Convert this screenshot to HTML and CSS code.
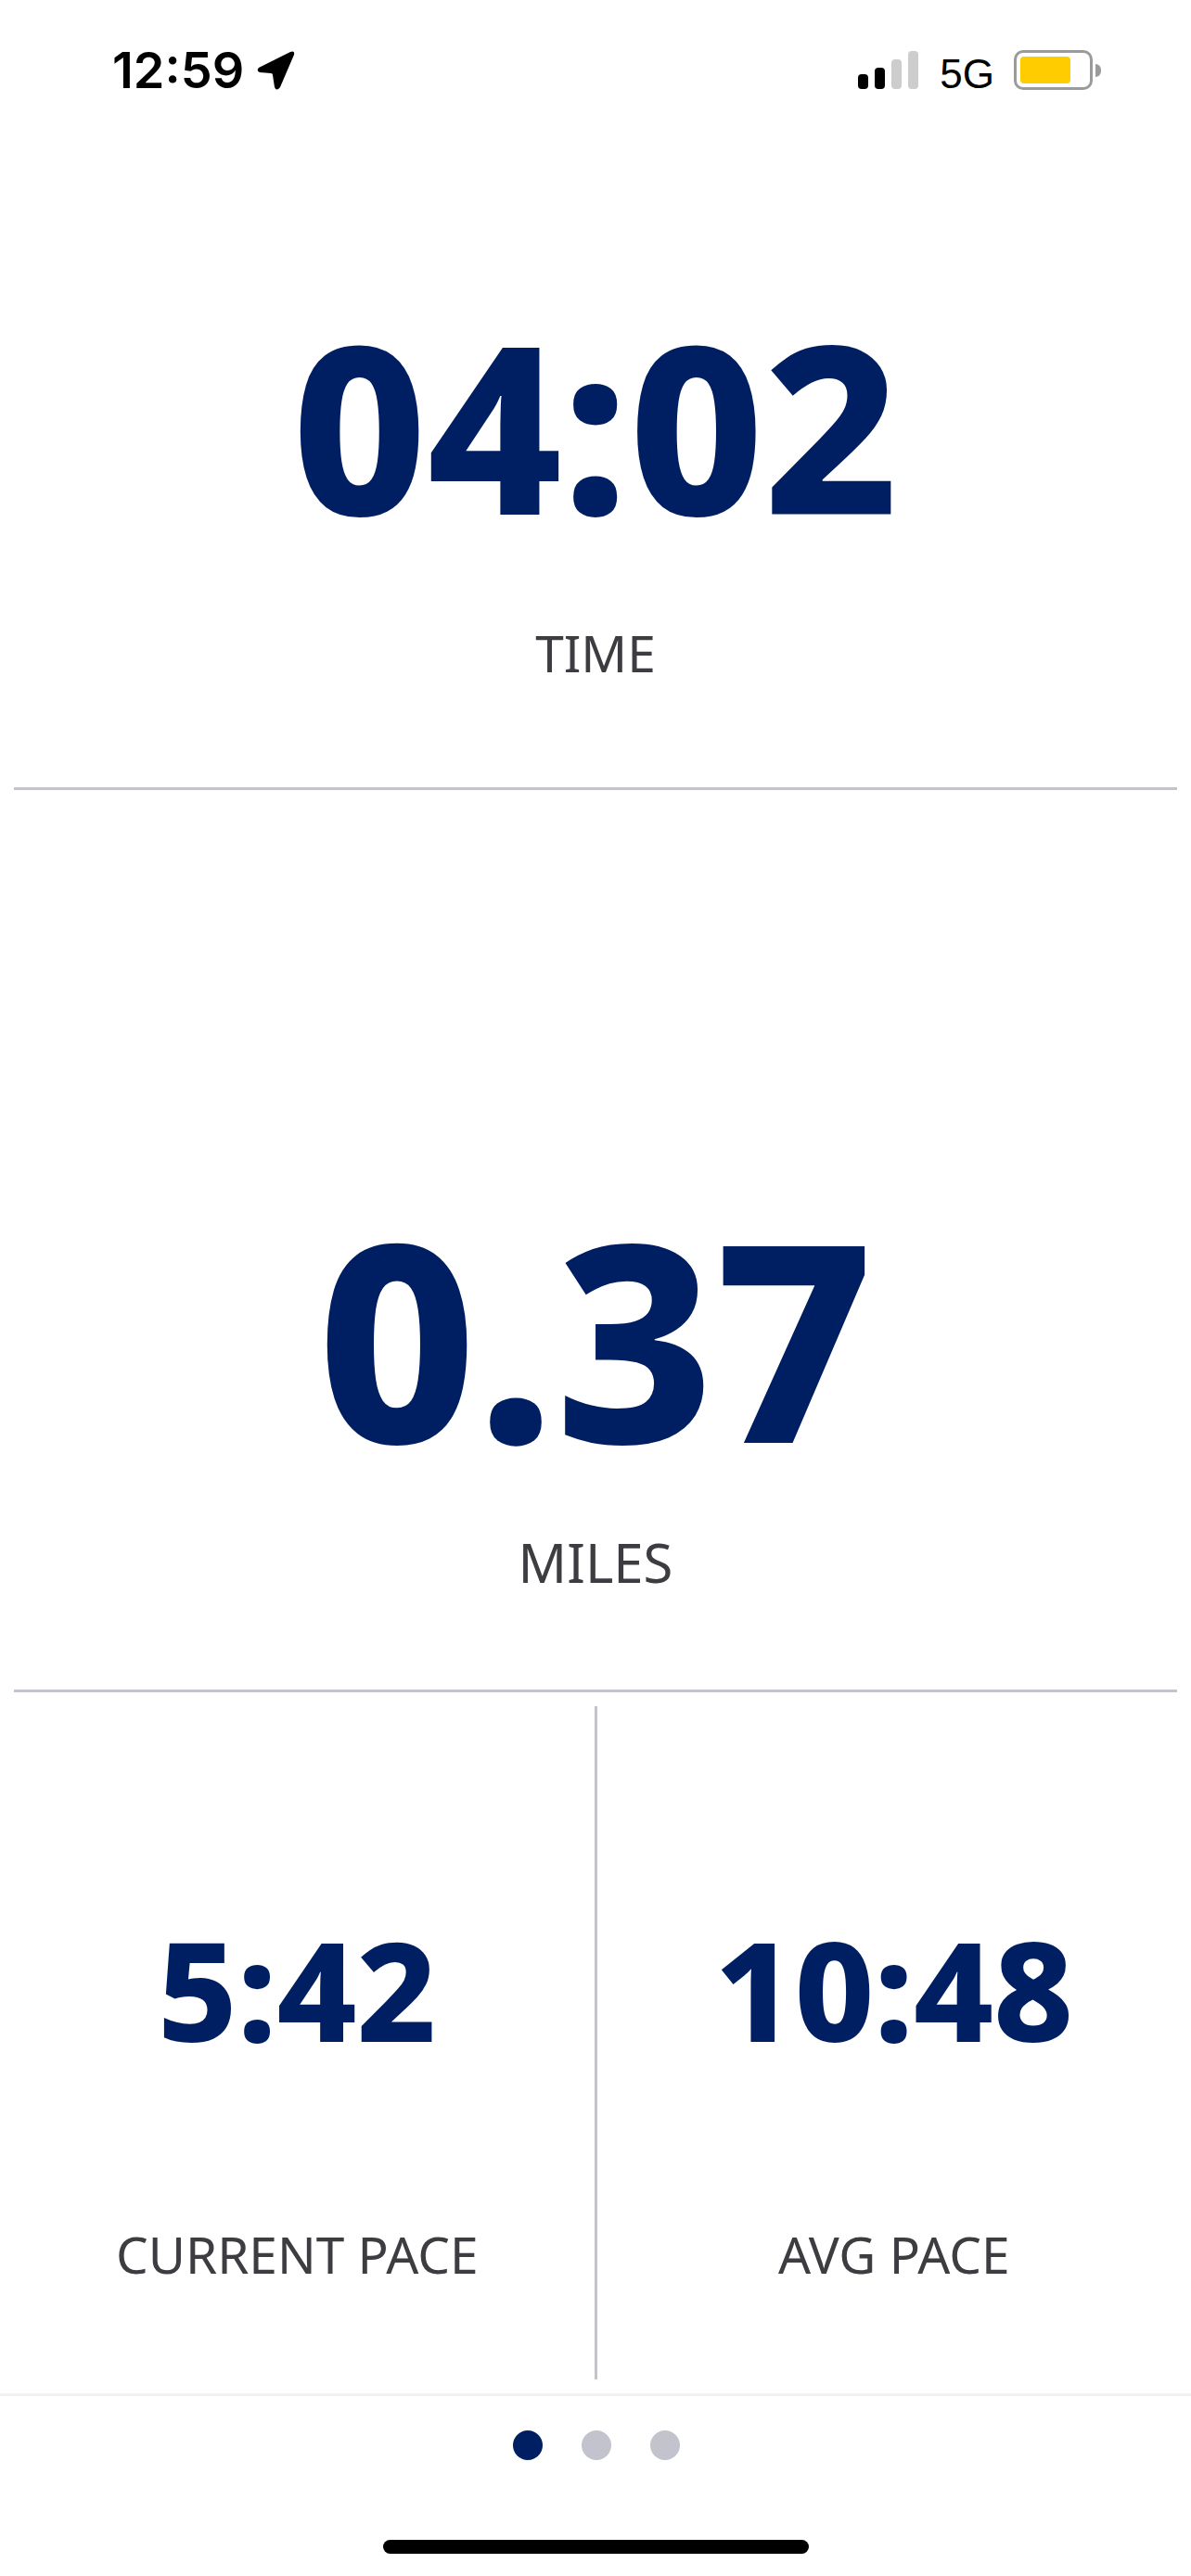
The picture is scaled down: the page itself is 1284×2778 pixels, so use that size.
FILE: index.html
```html
<!DOCTYPE html>
<html lang="en">
<head>
  <meta charset="UTF-8" />
  <meta name="viewport" content="width=device-width, initial-scale=1.0"/>
  <title>Run Stats</title>
  <link rel="stylesheet" href="styles.css">
</head>
<body>

  <div class="status-bar">
    <div class="status-left">
      <span class="clock">12:59</span>
      <svg class="arrow" viewBox="0 0 41 42"><path d="M2 18 L36 1 Q41 -1 40 4 L25 39 Q21 44 19 39 L17 26 Q17 24 15 24 L3 23 Q-1 21 2 18 Z"/></svg>
    </div>
    <div class="status-right">
      <div class="signal">
        <span class="bar b1"></span>
        <span class="bar b2"></span>
        <span class="bar b3 off"></span>
        <span class="bar b4 off"></span>
      </div>
      <span class="network">5G</span>
      <div class="battery">
        <div class="battery-body"><div class="battery-fill"></div></div>
        <div class="battery-cap"></div>
      </div>
    </div>
  </div>

  <div class="stat stat-time">
    <div class="value value-time">04:02</div>
    <div class="label label-time">TIME</div>
  </div>

  <div class="stat stat-miles">
    <div class="value value-miles">0.37</div>
    <div class="label label-miles">MILES</div>
  </div>

  <div class="pace-row">
    <div class="pace">
      <div class="value value-pace">5:42</div>
      <div class="label label-pace">CURRENT PACE</div>
    </div>
    <div class="pace-divider"></div>
    <div class="pace">
      <div class="value value-pace">10:48</div>
      <div class="label label-pace">AVG PACE</div>
    </div>
  </div>

  <div class="pager">
    <div class="dots">
      <span class="dot active"></span>
      <span class="dot"></span>
      <span class="dot"></span>
    </div>
    <div class="home-bar"></div>
  </div>

</body>
</html>
```

FILE: styles.css
```css
body {
  margin: 0;
  width: 1284px;
  height: 2778px;
  overflow: hidden;
  background: #fff;
  font-family: 'Noto Sans', sans-serif;
  display: flex;
  flex-direction: column;
}

.status-bar {
  height: 120px;
  flex: none;
  display: flex;
  justify-content: space-between;
  align-items: flex-start;
  padding: 0 97px 0 121px;
  box-sizing: border-box;
}

.status-left {
  display: flex;
  align-items: center;
  gap: 14px;
  margin-top: 44px;
}

.clock {
  font-family: Inter, sans-serif;
  font-weight: 600;
  font-size: 54px;
  line-height: 64px;
  color: #000;
}

.arrow {
  width: 41px;
  height: 42px;
  fill: #000;
}

.status-right {
  display: flex;
  align-items: flex-end;
  margin-top: 54px;
  height: 43px;
}

.signal {
  display: flex;
  align-items: flex-end;
  gap: 7px;
  height: 41px;
  margin-bottom: 1px;
}

.bar {
  width: 11px;
  border-radius: 4px;
  background: #000;
}

.bar.off {
  background: #cdcdcd;
}

.b1 { height: 16px; }
.b2 { height: 23px; }
.b3 { height: 32px; }
.b4 { height: 41px; }

.network {
  font-family: 'Liberation Sans', sans-serif;
  font-size: 44px;
  line-height: 32px;
  color: #000;
  margin: 0 21px 1px 23px;
}

.battery {
  display: flex;
  align-items: center;
}

.battery-body {
  width: 85px;
  height: 43px;
  box-sizing: border-box;
  border: 3px solid #9b9b9b;
  border-radius: 10px;
  padding: 4px;
}

.battery-fill {
  width: 54px;
  height: 100%;
  background: #ffcc00;
  border-radius: 4px;
}

.battery-cap {
  width: 6px;
  height: 14px;
  margin-left: 3px;
  background: #9b9b9b;
  border-radius: 0 7px 7px 0;
}

.stat {
  margin: 0 15px;
  flex: none;
  box-sizing: border-box;
  border-bottom: 3px solid #c3c3cd;
  display: flex;
  flex-direction: column;
  align-items: center;
  justify-content: flex-end;
}

.stat-time {
  height: 732px;
  padding-bottom: 110px;
}

.stat-miles {
  height: 973px;
  padding-bottom: 102px;
}

.value {
  color: #001e62;
  font-weight: 760;
}

.value-time {
  font-size: 252px;
  line-height: 220px;
  margin-bottom: 101px;
}

.value-miles {
  font-size: 297px;
  line-height: 260px;
  margin-bottom: 79px;
}

.value-pace {
  font-size: 149px;
  line-height: 160px;
  margin-bottom: 171px;
}

.label {
  color: #3c3c41;
  line-height: 70px;
}

.label-time {
  font-size: 55px;
}

.label-miles {
  font-size: 58px;
}

.label-pace {
  font-size: 55px;
}

.pace-row {
  flex: none;
  height: 756px;
  display: flex;
  box-sizing: border-box;
  padding-top: 15px;
}

.pace {
  flex: 1;
  display: flex;
  flex-direction: column;
  align-items: center;
  justify-content: flex-end;
  padding-bottom: 100px;
  height: 726px;
  box-sizing: border-box;
}

.pace-divider {
  width: 3px;
  height: 726px;
  background: #c3c3cd;
  flex: none;
}

.pager {
  flex: 1;
  border-top: 3px solid #eef1f5;
  display: flex;
  flex-direction: column;
  align-items: center;
  padding-top: 37px;
}

.dots {
  display: flex;
  gap: 42px;
  padding-left: 1px;
}

.dot {
  width: 32px;
  height: 32px;
  border-radius: 50%;
  background: #c3c3cd;
}

.dot.active {
  background: #001e62;
}

.home-bar {
  width: 459px;
  height: 15px;
  margin-top: 86px;
  background: #000;
  border-radius: 8px;
}
```
